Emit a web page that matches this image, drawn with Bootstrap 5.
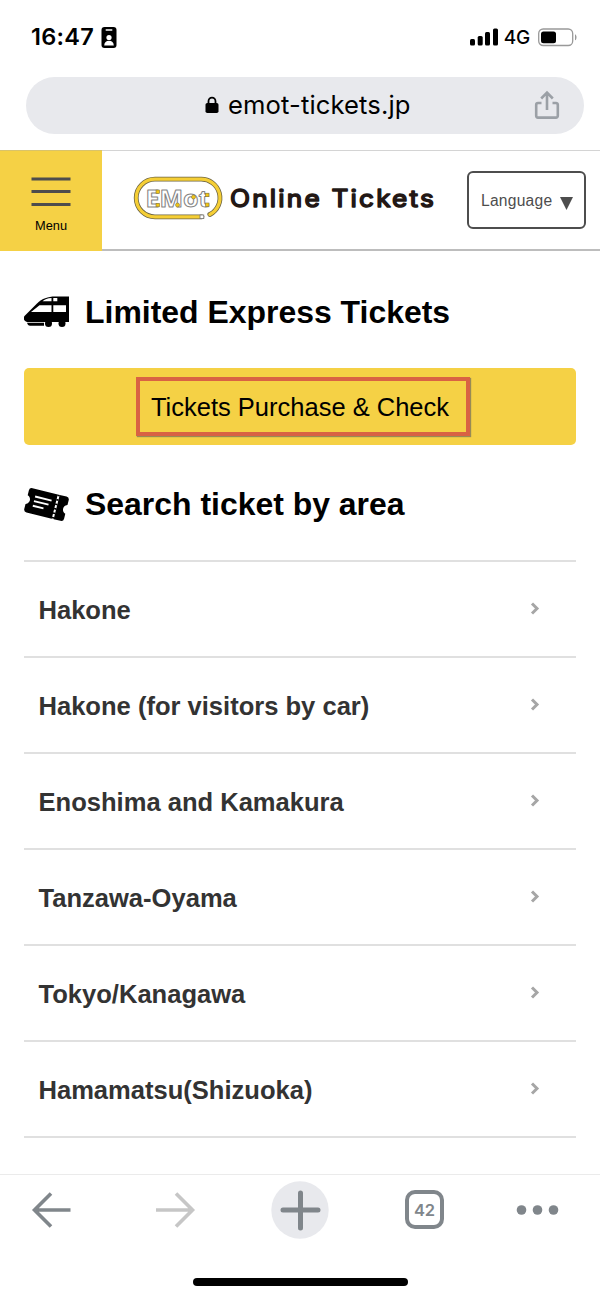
<!DOCTYPE html>
<html lang="en">
<head>
<meta charset="utf-8">
<meta name="viewport" content="width=device-width, initial-scale=1">
<title>EMot Online Tickets</title>
<link href="https://cdn.jsdelivr.net/npm/bootstrap@5.3.0/dist/css/bootstrap.min.css" rel="stylesheet">
<style>
body{width:600px;height:1299px;overflow:hidden;font-family:"Liberation Sans",Arial,sans-serif;color:#000}
svg{display:block;flex:none}
.ios{font-family:Inter,sans-serif}
.status{height:77px;padding:0 23px 3px 31px}
.clock{font-size:23.5px;font-weight:600;letter-spacing:.3px;line-height:28px}
.id-icon{margin-left:7px}
.net{font-size:19px;font-weight:500;line-height:28px;letter-spacing:-.2px;margin:2px 7px 0 6px}
.address{height:57px;margin:0 16px 16px 26px;background:#e8e9ed;padding:0 24px 2px 179px}
.host{font-size:25.6px;line-height:36px;letter-spacing:.12px;margin-left:9px}
.site{height:101px;border-top:1px solid #d4d4d4;border-bottom:2px solid #bdbdbd}
.menu-btn{width:102px;height:101px;background:#f5d145;border:0;border-top:1px solid #d9c36a;padding:26px 0 0;align-self:flex-start;margin-top:-1px}
.menu-label{font-size:12.8px;line-height:16px;margin-top:11px}
.site-logo{margin:24px 0 0 30px}
.lang{width:119px;height:58px;border:2px solid #4d4d4d;border-radius:6px;color:#4d4d4d;font-size:15.6px;letter-spacing:.25px;margin:20px 14px 0 0;padding:2px 11px 0 12px;background:#fff}
.sect{font-size:31.95px;font-weight:700;line-height:36px;margin:-2px 0 0 15px}
.buy{height:77px;border-radius:5px;background:#f5d145;margin-top:37px}
.marked{width:334px;height:59px;border:4px solid #d96243;font-size:25.5px;box-shadow:1px 1px 1px #988b55;margin:0 0 1px 6px;padding:3px 6px 0 0}
.areas{margin-top:37px;border-top:2px solid #e0e0e0}
.area{height:96px;border-bottom:2px solid #e0e0e0;padding:3px 35px 0 14.5px;color:#333;font-size:25.55px;font-weight:700}
.area svg{margin-top:-3px}
.toolbar{height:72px;margin-top:36px;border-top:1px solid #ebebeb;padding:0 41px 2px 31px}
.home{width:215px;height:8px;background:#000;margin:32px 0 0 193px}
</style>
</head>
<body class="bg-white">
<div class="status ios d-flex align-items-center">
  <span class="clock">16:47</span>
  <svg class="id-icon" width="16" height="21" viewBox="0 0 16 21"><rect x=".5" width="15" height="21" rx="3"/><rect x="4.5" y="2.2" width="7" height="1.5" rx=".7" fill="#fff"/><circle cx="8" cy="10.5" r="2.6" fill="#fff"/><path d="M3.2 18.5c0-3 2-4.700 4.800-4.700s4.800 1.700 4.800 4.700z" fill="#fff"/></svg>
  <svg class="ms-auto" width="28" height="18" viewBox="0 0 28 18"><rect y="11" width="5" height="6.500" rx="1.500"/><rect x="7.700" y="8" width="5" height="9.500" rx="1.500"/><rect x="15" y="4" width="5" height="13.500" rx="1.500"/><rect x="23" y=".500" width="5" height="17" rx="1.500"/></svg>
  <span class="net">4G</span>
  <svg width="40" height="19" viewBox="0 0 40 19"><rect x="1.700" y="1" width="34" height="16.500" rx="4.500" fill="none" stroke="#999" stroke-width="1.300"/><rect x="4" y="3.500" width="15" height="11.700" rx="2.500"/><path d="M38 6.200c2 .7 2 5.400 0 6.100z" fill="#999"/></svg>
</div>
<div class="address ios rounded-pill d-flex align-items-center">
  <svg width="14" height="18" viewBox="0 0 14 18"><path d="M3.500 9V5.200a3.500 3.500 0 0 1 7 0V9" fill="none" stroke="#000" stroke-width="1.800"/><rect x=".500" y="7" width="13" height="10" rx="1.800"/></svg>
  <span class="host">emot-tickets.jp</span>
  <svg class="ms-auto" width="26" height="30" viewBox="0 0 26 30" fill="none" stroke="#9ba0a6" stroke-width="2.600"><path d="M7.500 13H4a1.800 1.800 0 0 0-1.800 1.800v11A1.800 1.800 0 0 0 4 27.600h18a1.800 1.800 0 0 0 1.800-1.800v-11A1.800 1.800 0 0 0 22 13h-3.500M13 20V3M7.200 8.500 13 2.700l5.800 5.800"/></svg>
</div>
<header class="site d-flex">
  <button class="menu-btn d-flex flex-column align-items-center">
    <svg width="40" height="30" viewBox="0 0 40 30" fill="#4d4d4d"><path d="M.500 .500h39v3h-39zM.500 13h39v3h-39zM.500 26h39v3h-39z"/></svg>
    <span class="menu-label">Menu</span>
  </button>
  <svg class="site-logo" width="306" height="48" viewBox="132 175 306 48">
    <path d="M202 216.800H155a18.800 18.800 0 0 1 0-37.600h45.500a18.800 18.700 0 0 1 9.300 35.300" fill="none" stroke="#6d6544" stroke-width="4.800" stroke-linecap="round"/>
    <path d="M202 216.800H155a18.800 18.800 0 0 1 0-37.600h45.500a18.800 18.700 0 0 1 9.300 35.300" fill="none" stroke="#f5ce35" stroke-width="3.200" stroke-linecap="round"/>
    <rect x="200" y="215" width="3.800" height="3.600" fill="#fff" stroke="#777" stroke-width=".8"/>
    <text x="145.500" y="206.600" font-family="Open Sans,sans-serif" font-weight="700" font-size="24" textLength="64" lengthAdjust="spacingAndGlyphs" fill="#fff" stroke="#858585" stroke-width="1" stroke-linejoin="round">EMot</text>
    <g fill="#f2c817" stroke="#85733a" stroke-width=".6"><rect x="156" y="190" width="3.500" height="3.500"/><rect x="156" y="203.300" width="3.500" height="3.500"/><circle cx="177.500" cy="205" r="2"/><circle cx="193.500" cy="197" r="2"/><rect x="205.500" y="193.200" width="3.500" height="3.500"/><rect x="205.500" y="203" width="3.500" height="3.500"/></g>
    <text x="230" y="206.800" font-family="Inter,sans-serif" font-weight="400" font-size="24" letter-spacing="2" textLength="206" lengthAdjust="spacingAndGlyphs" fill="#231815" stroke="#231815" stroke-width="1.500" stroke-linejoin="round">Online Tickets</text>
  </svg>
  <button class="lang ms-auto d-flex align-items-center justify-content-between"><span>Language</span><svg style="margin-top:3px" width="13" height="14" viewBox="0 0 13 14"><path d="M0 1h13L6.500 14z" fill="#4d4d4d"/></svg></button>
</header>
<main class="px-4">
  <div class="d-flex align-items-center" style="height:36px;margin-top:44px">
    <svg width="46" height="36" viewBox="24 295 46 36"><path d="M24.500 316 37 303.500c5-5 11-7 18-7H69V322H27c-3-.8-4-3.500-2.500-6z"/><path d="M42.500 301.300H51.500v-3.300c-4 .3-7 1.300-9 3.300zM53.300 301.300h4V298h-4zM31 312h20.500v-6.800H39.500zM53.300 305.200v6.800H66v-6.800z" fill="#fff"/><path d="M27 322.800h17v3H30c-1.500 0-2.500-1-3-3z"/><circle cx="48.500" cy="323.500" r="3.500"/><circle cx="62" cy="323.500" r="3.500"/></svg>
    <h2 class="sect">Limited Express Tickets</h2>
  </div>
  <div class="buy d-flex align-items-center justify-content-center"><div class="marked d-flex align-items-center justify-content-center"><span class="text-nowrap">Tickets Purchase &amp; Check</span></div></div>
  <div class="d-flex align-items-center" style="height:36px;margin-top:42px">
    <svg width="46" height="36" viewBox="24 486.500 46 36"><g transform="translate(46.500 504) rotate(14)"><path d="M-17.500-12.500H8.500v25h-26a3 3 0 0 1-3-3V4.500c4.500-1.500 4.500-7.500 0-9v-5a3 3 0 0 1 3-3zM10.500-12.500h7a3 3 0 0 1 3 3v5c-4.500 1.500-4.500 7.500 0 9v5a3 3 0 0 1-3 3h-7z"/><path d="M9.500-12.500v25" stroke="#000" stroke-width="2.400" stroke-dasharray="1.600 3"/><path d="M-13-5H4M-13-.300H2M-13 4.500H-2" stroke="#fff" stroke-width="1.900"/></g></svg>
    <h2 class="sect">Search ticket by area</h2>
  </div>
  <div class="areas">
    <div class="area d-flex align-items-center justify-content-between">Hakone<svg width="12" height="14" viewBox="0 0 12 14"><path d="m3 1.500 5 5-5 5" fill="none" stroke="#a6a6a6" stroke-width="3"/></svg></div>
    <div class="area d-flex align-items-center justify-content-between">Hakone (for visitors by car)<svg width="12" height="14" viewBox="0 0 12 14"><path d="m3 1.500 5 5-5 5" fill="none" stroke="#a6a6a6" stroke-width="3"/></svg></div>
    <div class="area d-flex align-items-center justify-content-between">Enoshima and Kamakura<svg width="12" height="14" viewBox="0 0 12 14"><path d="m3 1.500 5 5-5 5" fill="none" stroke="#a6a6a6" stroke-width="3"/></svg></div>
    <div class="area d-flex align-items-center justify-content-between">Tanzawa-Oyama<svg width="12" height="14" viewBox="0 0 12 14"><path d="m3 1.500 5 5-5 5" fill="none" stroke="#a6a6a6" stroke-width="3"/></svg></div>
    <div class="area d-flex align-items-center justify-content-between">Tokyo/Kanagawa<svg width="12" height="14" viewBox="0 0 12 14"><path d="m3 1.500 5 5-5 5" fill="none" stroke="#a6a6a6" stroke-width="3"/></svg></div>
    <div class="area d-flex align-items-center justify-content-between">Hamamatsu(Shizuoka)<svg width="12" height="14" viewBox="0 0 12 14"><path d="m3 1.500 5 5-5 5" fill="none" stroke="#a6a6a6" stroke-width="3"/></svg></div>
  </div>
</main>
<nav class="toolbar d-flex align-items-center">
  <svg width="40" height="36" viewBox="0 0 40 36"><path d="M39.500 18H4M20 1.500 3.500 18 20 34.500" fill="none" stroke="#80868b" stroke-width="3.600"/></svg>
  <svg style="margin-left:85px" width="40" height="36" viewBox="0 0 40 36"><path d="M0 18h36M20 1.500 36.500 18 20 34.500" fill="none" stroke="#c6c6c6" stroke-width="3.600"/></svg>
  <svg style="margin-left:75px" width="58" height="58" viewBox="0 0 58 58"><circle cx="29" cy="29" r="28.700" fill="#e8e9ed"/><path d="M12 29h35M29.500 12v35" stroke="#80868b" stroke-width="5" stroke-linecap="round"/></svg>
  <svg style="margin-left:76px" width="39" height="39" viewBox="0 0 39 39"><rect x="2" y="2" width="35" height="35" rx="8" fill="none" stroke="#80868b" stroke-width="4"/><text x="19.500" y="25.500" text-anchor="middle" font-family="Inter,sans-serif" font-weight="600" font-size="16.500" fill="#80868b" textLength="21">42</text></svg>
  <svg class="ms-auto" width="43" height="10" viewBox="0 0 43 10" fill="#80868b"><circle cx="5.500" cy="5" r="4.800"/><circle cx="21.500" cy="5" r="4.800"/><circle cx="37.500" cy="5" r="4.800"/></svg>
</nav>
<div class="home rounded-pill"></div>
<script src="https://cdn.jsdelivr.net/npm/bootstrap@5.3.0/dist/js/bootstrap.bundle.min.js"></script>
</body>
</html>
